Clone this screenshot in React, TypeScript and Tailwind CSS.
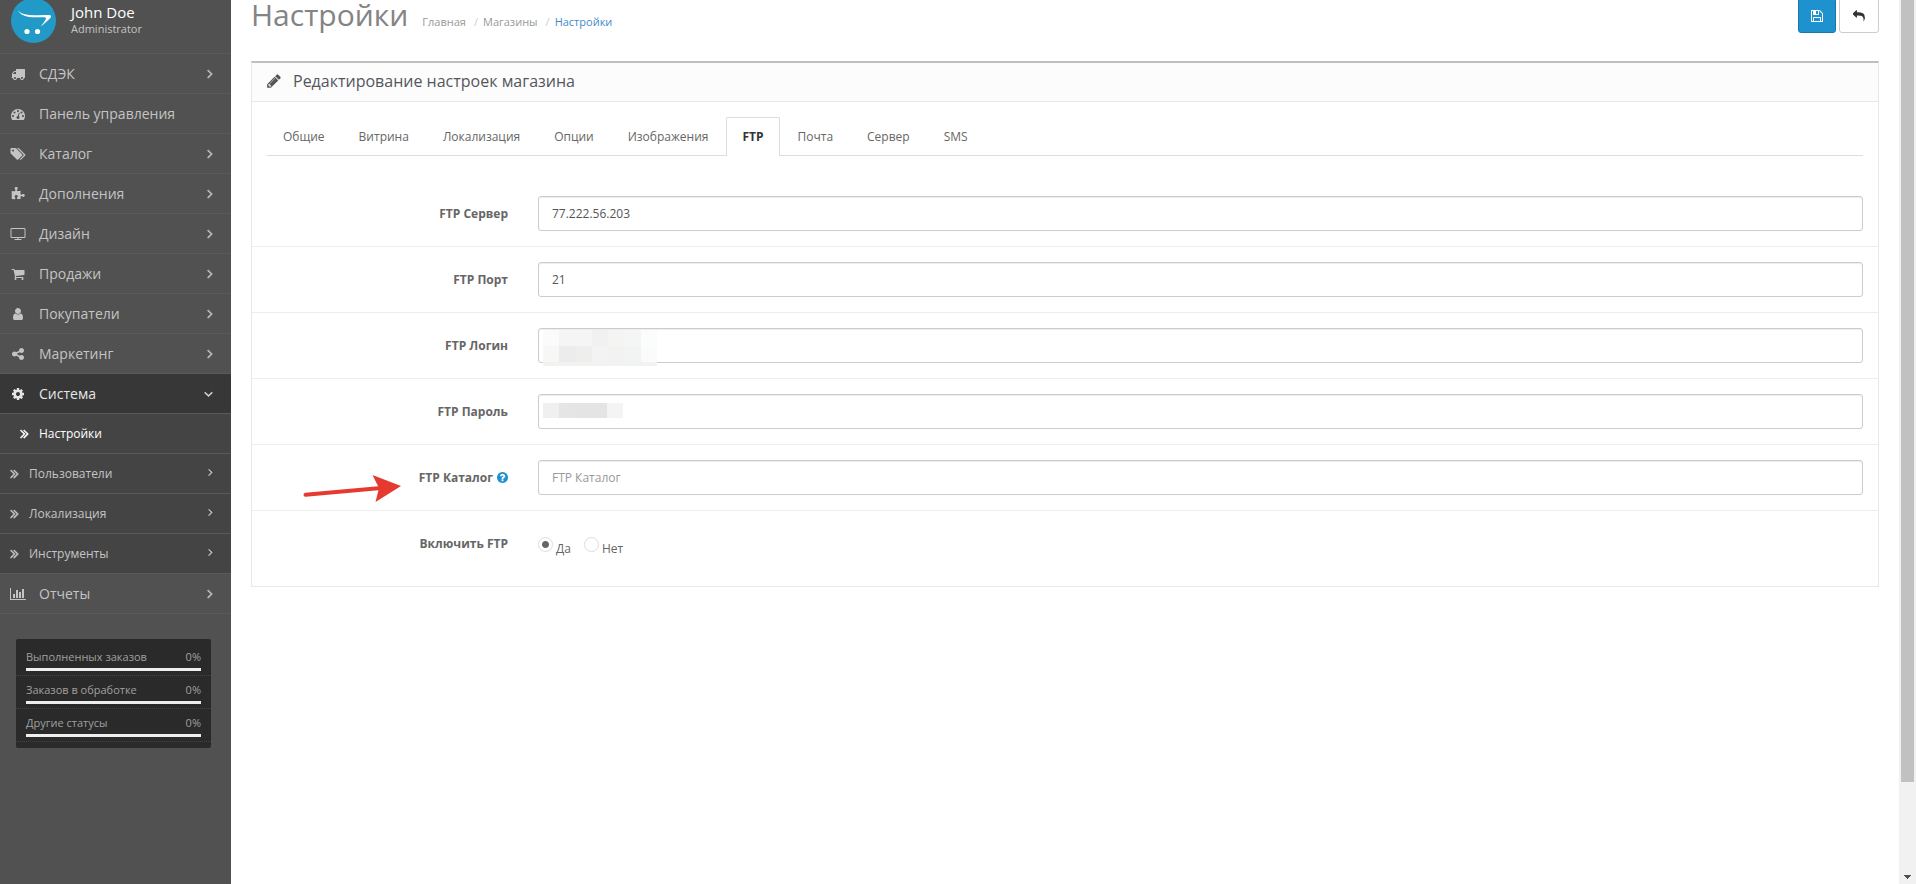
import { useState, type ReactNode } from "react";

type IconData = { x?: number; w?: number; d: string };

const icons: Record<string, IconData> = {
  truck: {
    d: "M640 1408q0-52-38-90t-90-38-90 38-38 90 38 90 90 38 90-38 38-90zm-384-512h384v-256h-158q-13 0-22 9l-195 195q-9 9-9 22v30zm1280 512q0-52-38-90t-90-38-90 38-38 90 38 90 90 38 90-38 38-90zm256-1088v1024q0 15-4 26.5t-13.5 18.5-16.5 11.5-23.5 6-22.5 2-25.5 0-22.5-.5q0 106-75 181t-181 75-181-75-75-181h-384q0 106-75 181t-181 75-181-75-75-181h-64q-3 0-22.5.5t-25.5 0-22.5-2-23.5-6-16.5-11.5-13.5-18.5-4-26.5q0-26 19-45t45-19v-320q0-8-.5-35t0-38 2.5-34.5 6.5-37 14-30.5 22.5-30l198-198q19-19 50.5-32t58.5-13h160v-192q0-26 19-45t45-19h1024q26 0 45 19t19 45z",
  },
  dashboard: {
    d: "M384 1152q0-53-37.5-90.5t-90.5-37.5-90.5 37.5-37.5 90.5 37.5 90.5 90.5 37.5 90.5-37.5 37.5-90.5zm192-448q0-53-37.5-90.5t-90.5-37.5-90.5 37.5-37.5 90.5 37.5 90.5 90.5 37.5 90.5-37.5 37.5-90.5zm428 481l101-382q6-26-7.5-48.5t-38.5-29.5-48 6.5-30 39.5l-101 382q-60 5-107 43.5t-63 98.5q-20 77 20 146t117 89 146-20 89-117q16-60-6-117t-72-91zm660-33q0-53-37.5-90.5t-90.5-37.5-90.5 37.5-37.5 90.5 37.5 90.5 90.5 37.5 90.5-37.5 37.5-90.5zm-640-640q0-53-37.5-90.5t-90.5-37.5-90.5 37.5-37.5 90.5 37.5 90.5 90.5 37.5 90.5-37.5 37.5-90.5zm448 192q0-53-37.5-90.5t-90.5-37.5-90.5 37.5-37.5 90.5 37.5 90.5 90.5 37.5 90.5-37.5 37.5-90.5zm320 448q0 261-141 483-19 29-54 29h-1402q-35 0-54-29-141-221-141-483 0-182 71-348t191-286 286-191 348-71 348 71 286 191 191 286 71 348z",
  },
  tags: {
    w: 1920,
    d: "M448 448q0-53-37.5-90.5t-90.5-37.5-90.5 37.5-37.5 90.5 37.5 90.5 90.5 37.5 90.5-37.5 37.5-90.5zm1067 576q0 53-37 90l-491 492q-39 37-91 37-53 0-90-37l-715-716q-38-37-64.5-101t-26.5-117v-416q0-52 38-90t90-38h416q53 0 117 26.5t102 64.5l715 714q37 39 37 91zm384 0q0 53-37 90l-491 492q-39 37-91 37-36 0-59-14t-53-45l470-470q37-37 37-90 0-52-37-91l-715-714q-38-38-102-64.5t-117-26.5h224q53 0 117 26.5t102 64.5l715 714q37 39 37 91z",
  },
  puzzle: {
    d: "M1755 1083q0 81-44.5 135t-123.5 54q-41 0-77.5-17.5t-59-38-56.5-38-71-17.5q-110 0-110 124 0 39 16 115t15 115v5q-22 0-33 1-34 3-97.5 11.5t-115.5 13.5-98 5q-61 0-103-26.5t-42-83.5q0-37 17.5-71t38-56.5 38-59 17.5-77.5q0-79-54-123.5t-135-44.5q-84 0-143 45.5t-59 127.5q0 43 15 83t33.5 64.5 33.5 53 15 50.5q0 45-46 89-37 35-117 35-95 0-245-24-9-2-27.5-4t-27.5-4l-13-2q-1 0-3-1-2 0-2-1v-1024q2 1 17.5 3.5t34 5 21.5 3.5q150 24 245 24 80 0 117-35 46-44 46-89 0-22-15-50.5t-33.5-53-33.5-64.5-15-83q0-82 59-127.5t144-45.5q80 0 134 44.5t54 123.5q0 41-17.5 77.5t-38 59-38 56.5-17.5 71q0 57 42 83.5t103 26.5q64 0 180-15t163-17v2q-1 2-3.5 17.5t-5 34-3.5 21.5q-24 150-24 245 0 80 35 117 44 46 89 46 22 0 50.5-15t53-33.5 64.5-33.5 83-15q82 0 127.5 59t45.5 143z",
  },
  television: {
    w: 1920,
    d: "M1792 1248v-960q0-13-9.5-22.5t-22.5-9.5h-1600q-13 0-22.5 9.5t-9.5 22.5v960q0 13 9.5 22.5t22.5 9.5h1600q13 0 22.5-9.5t9.5-22.5zm128-960v960q0 66-47 113t-113 47h-736v128h352q14 0 23 9t9 23v64q0 14-9 23t-23 9h-832q-14 0-23-9t-9-23v-64q0-14 9-23t23-9h352v-128h-736q-66 0-113-47t-47-113v-960q0-66 47-113t113-47h1600q66 0 113 47t47 113z",
  },
  cart: {
    d: "M704 1536q0 52-38 90t-90 38-90-38-38-90 38-90 90-38 90 38 38 90zm896 0q0 52-38 90t-90 38-90-38-38-90 38-90 90-38 90 38 38 90zm128-1088v512q0 24-16.5 42.5t-40.5 21.5l-1044 122q13 60 13 70 0 16-24 64h920q26 0 45 19t19 45-19 45-45 19h-1024q-26 0-45-19t-19-45q0-11 8-31.5t16-36 21.5-40 15.5-29.5l-177-823h-204q-26 0-45-19t-19-45 19-45 45-19h256q16 0 28.5 6.5t19.5 15.5 13 24.5 8 26 5.5 29.5 4.5 26h1201q26 0 45 19t19 45z",
  },
  user: {
    d: "M1536 1399q0 109-62.5 187t-150.5 78h-854q-88 0-150.5-78t-62.5-187q0-85 8.5-160.5t31.5-152 58.5-131 94-89 134.5-34.5q131 128 313 128t313-128q76 0 134.5 34.5t94 89 58.5 131 31.5 152 8.5 160.5zm-256-887q0 159-112.5 271.5t-271.5 112.5-271.5-112.5-112.5-271.5 112.5-271.5 271.5-112.5 271.5 112.5 112.5 271.5z",
  },
  share: {
    d: "M1344 1024q133 0 226.5 93.5t93.5 226.5-93.5 226.5-226.5 93.5-226.5-93.5-93.5-226.5q0-12 2-34l-360-180q-92 86-218 86-133 0-226.5-93.5t-93.5-226.5 93.5-226.5 226.5-93.5q126 0 218 86l360-180q-2-22-2-34 0-133 93.5-226.5t226.5-93.5 226.5 93.5 93.5 226.5-93.5 226.5-226.5 93.5q-126 0-218-86l-360 180q2 22 2 34t-2 34l360 180q92-86 218-86z",
  },
  cog: {
    d: "M1152 896q0-106-75-181t-181-75-181 75-75 181 75 181 181 75 181-75 75-181zm512-109v222q0 12-8 23t-20 13l-185 28q-19 54-39 91 35 50 107 138 10 12 10 25t-9 23q-27 37-99 108t-94 71q-12 0-26-9l-138-108q-44 23-91 38-16 136-29 186-7 28-36 28h-222q-14 0-24.5-8.5t-11.5-21.5l-28-184q-49-16-90-37l-141 107q-10 9-25 9-14 0-25-11-126-114-165-168-7-10-7-23 0-12 8-23 15-21 51-66.5t54-70.5q-27-50-41-99l-183-27q-13-2-21-12.5t-8-23.5v-222q0-12 8-23t19-13l186-28q14-46 39-92-40-57-107-138-10-12-10-24 0-10 9-23 26-36 98.5-107.5t94.5-71.5q13 0 26 10l138 107q44-23 91-38 16-136 29-186 7-28 36-28h222q14 0 24.5 8.5t11.5 21.5l28 184q49 16 90 37l142-107q9-9 24-9 13 0 25 10 129 119 165 170 7 8 7 22 0 12-8 23-15 21-51 66.5t-54 70.5q26 50 41 98l183 28q13 2 21 12.5t8 23.5z",
  },
  chart: {
    w: 2048,
    d: "M640 896v512h-256v-512h256zm384-512v1024h-256v-1024h256zm1024 1152v128h-2048v-1536h128v1408h1920zm-640-896v768h-256v-768h256zm384-384v1152h-256v-1152h256z",
  },
  angle: {
    w: 640,
    d: "M595 960q0 13-10 23l-466 466q-10 10-23 10t-23-10l-50-50q-10-10-10-23t10-23l393-393-393-393q-10-10-10-23t10-23l50-50q10-10 23-10t23 10l466 466q10 10 10 23z",
  },
  angleDown: {
    w: 1152,
    d: "M1075 736q0 13-10 23l-466 466q-10 10-23 10t-23-10l-466-466q-10-10-10-23t10-23l50-50q10-10 23-10t23 10l393 393 393-393q10-10 23-10t23 10l50 50q10 10 10 23z",
  },
  angles: {
    w: 1024,
    d: "M595 960q0 13-10 23l-466 466q-10 10-23 10t-23-10l-50-50q-10-10-10-23t10-23l393-393-393-393q-10-10-10-23t10-23l50-50q10-10 23-10t23 10l466 466q10 10 10 23zm384 0q0 13-10 23l-466 466q-10 10-23 10t-23-10l-50-50q-10-10-10-23t10-23l393-393-393-393q-10-10-10-23t10-23l50-50q10-10 23-10t23 10l466 466q10 10 10 23z",
  },
  pencil: {
    x: 128,
    w: 1536,
    d: "M491 1536l91-91-235-235-91 91v107h128v128h107zm523-928q0-22-22-22-10 0-17 7l-542 542q-7 7-7 17 0 22 22 22 10 0 17-7l542-542q7-7 7-17zm-54-192l416 416-832 832h-416v-416zm683 96q0 53-37 90l-166 166-416-416 166-165q36-38 90-38 53 0 91 38l235 234q37 39 37 91z",
  },
  save: {
    x: 128,
    w: 1536,
    d: "M512 1536h768v-384h-768v384zm896 0h128v-896q0-14-10-38.5t-20-34.5l-281-281q-10-10-34-20t-39-10v416q0 40-28 68t-68 28h-576q-40 0-68-28t-28-68v-416h-128v1280h128v-416q0-40 28-68t68-28h832q40 0 68 28t28 68v416zm-384-928v-320q0-13-9.5-22.5t-22.5-9.5h-192q-13 0-22.5 9.5t-9.5 22.5v320q0 13 9.5 22.5t22.5 9.5h192q13 0 22.5-9.5t9.5-22.5zm640 32v928q0 40-28 68t-68 28h-1344q-40 0-68-28t-28-68v-1344q0-40 28-68t68-28h928q40 0 88 20t76 48l280 280q28 28 48 76t20 88z",
  },
  reply: {
    d: "M1792 1120q0 166-127 451-3 7-10.5 24t-13.5 30-13 22q-12 17-28 17-15 0-23.5-10t-8.5-25q0-9 2.5-26.5t2.5-23.5q5-68 5-123 0-112-19.5-200.5t-54-153.5-89-112-120-78-144.5-45-162.5-24.5-175.5-6.5h-224v256q0 26-19 45t-45 19-45-19l-512-512q-19-19-19-45t19-45l512-512q19-19 45-19t45 19 19 45v256h224q713 0 875 403 53 134 53 333z",
  },
  question: {
    x: 128,
    w: 1536,
    d: "M1024 1376v-192q0-14-9-23t-23-9h-192q-14 0-23 9t-9 23v192q0 14 9 23t23 9h192q14 0 23-9t9-23zm256-672q0-88-55.5-163t-138.5-116-170-41q-243 0-371 213-15 24 8 42l132 100q7 6 19 6 16 0 25-12 53-68 86-92 34-24 86-24 48 0 85.5 26t37.5 59q0 38-20 61t-68 45q-63 28-115.5 86.5t-52.5 125.5v36q0 14 9 23t23 9h192q14 0 23-9t9-23q0-19 21.5-49.5t54.5-49.5q32-18 49-28.5t46-35 44.5-48 28-60.5 12.5-81zm384 192q0 209-103 385.5t-279.5 279.5-385.5 103-385.5-103-279.5-279.5-103-385.5 103-385.5 279.5-279.5 385.5-103 385.5 103 279.5 279.5 103 385.5z",
  },
};

function Icon({ name, className }: { name: string; className: string }) {
  const icon = icons[name];
  return (
    <svg viewBox={`${icon.x ?? 0} 0 ${icon.w ?? 1792} 1792`} className={`shrink-0 ${className}`} fill="currentColor" aria-hidden="true">
      <path d={icon.d} />
    </svg>
  );
}

const menu = [
  { icon: "truck", label: "СДЭК", more: true },
  { icon: "dashboard", label: "Панель управления", more: false },
  { icon: "tags", label: "Каталог", more: true },
  { icon: "puzzle", label: "Дополнения", more: true },
  { icon: "television", label: "Дизайн", more: true },
  { icon: "cart", label: "Продажи", more: true },
  { icon: "user", label: "Покупатели", more: true },
  { icon: "share", label: "Маркетинг", more: true },
];

const subMenu = ["Пользователи", "Локализация", "Инструменты"];
const stats = ["Выполненных заказов", "Заказов в обработке", "Другие статусы"];
const tabs = ["Общие", "Витрина", "Локализация", "Опции", "Изображения", "FTP", "Почта", "Сервер", "SMS"];

function MenuLink({ icon, label, more }: { icon: string; label: string; more: boolean }) {
  return (
    <a href="#" className="flex h-10 items-center border-t border-[#5a5a5a] pr-[18px] pl-[10px] text-sm text-[#c4c4c4]">
      <span className="flex w-[29px]">
        <Icon name={icon} className="h-[14px] w-4" />
      </span>
      <span className="grow">{label}</span>
      {more && <Icon name="angle" className="h-[15px] w-[6px] stroke-current stroke-[60]" />}
    </a>
  );
}

function Sidebar() {
  return (
    <nav className="w-[231px] shrink-0 bg-[#515151]">
      <div className="flex h-[55px] items-start gap-[15px] pl-[11px]">
        <svg viewBox="0 0 45 45" className="size-[45px] shrink-0" aria-hidden="true">
          <circle cx="22.5" cy="22.5" r="22.5" fill="#229ac8" />
          <path
            fill="#fff"
            d="M6.800 12c2.200 3.200 6.200 4.600 12.200 5 6 .4 13 .2 18.500.1 2.800 0 3.400 1 1.800 2.900-2 2.400-5 4.800-9.400 8.600 1.800-3 3.700-5.200 4.700-7.100.8-1.500.4-2.100-1.600-2.200-5-.3-10.800.4-16.200-.6C12 17.700 8.600 15.800 6.800 12z"
          />
          <circle cx="16" cy="33.500" r="2.600" fill="#fff" />
          <circle cx="26.500" cy="33.500" r="2.600" fill="#fff" />
        </svg>
        <div className="pt-1">
          <div className="text-[15px] leading-5 text-white">John Doe</div>
          <div className="text-[11px] leading-[14px] text-[#c4c4c4]">Administrator</div>
        </div>
      </div>
      {menu.map((item) => (
        <MenuLink key={item.label} {...item} />
      ))}
      <a href="#" className="flex h-10 items-center border-t border-[#5a5a5a] bg-[#373737] pr-[18px] pl-[10px] text-sm text-[#e6e6e6]">
        <span className="flex w-[29px]">
          <Icon name="cog" className="h-[14px] w-4" />
        </span>
        <span className="grow">Система</span>
        <Icon name="angleDown" className="h-[14px] w-[9px] stroke-current stroke-[60]" />
      </a>
      <div className="bg-[#444444]">
        <a href="#" className="flex h-10 items-center border-t border-[#5a5a5a] pl-5 text-xs font-medium text-white">
          <span className="flex w-[19px]">
            <Icon name="angles" className="h-[15px] w-[9px] stroke-current stroke-[60]" />
          </span>
          Настройки
        </a>
        {subMenu.map((label) => (
          <a key={label} href="#" className="flex h-10 items-center border-t border-[#5a5a5a] pr-[18px] pl-[10px] text-xs text-[#c4c4c4]">
            <span className="flex w-[19px]">
              <Icon name="angles" className="h-[15px] w-[9px] stroke-current stroke-[60]" />
            </span>
            <span className="grow">{label}</span>
            <Icon name="angle" className="mb-[3px] h-3 w-[5px] stroke-current stroke-[60]" />
          </a>
        ))}
      </div>
      <MenuLink icon="chart" label="Отчеты" more />
      <div className="border-t border-[#5a5a5a] px-4 pt-[25px]">
        <div className="mr-1 rounded-xs bg-[#2a2a2a] pt-1 pb-[6px] text-[11px] leading-4 text-[#a0a0a0]">
          {stats.map((label) => (
            <div key={label} className="border-b border-dotted border-[#444444] px-[10px] pt-[6px] pb-1">
              <div className="flex justify-between">
                <span>{label}</span>
                <span>0%</span>
              </div>
              <div className="mt-[3px] h-[3px] bg-[#eeeeee]" />
            </div>
          ))}
        </div>
      </div>
    </nav>
  );
}

function Row({ id, label, children, extra, last }: { id?: string; label: ReactNode; children: ReactNode; extra?: ReactNode; last?: boolean }) {
  return (
    <div className={last ? "flex py-[15px]" : "flex border-b border-[#ededed] py-[15px]"}>
      <div className="relative w-1/6 shrink-0 px-[15px] pt-[9px] text-right text-xs leading-[17px] font-bold text-[#666666]">
        {id ? <label htmlFor={id}>{label}</label> : <span>{label}</span>}
        {extra}
      </div>
      <div className="relative grow px-[15px]">{children}</div>
    </div>
  );
}

const inputClass =
  "block h-[35px] w-full rounded-[3px] border border-[#cccccc] bg-white px-[13px] text-xs text-[#555555] shadow-[inset_0_1px_1px_rgba(0,0,0,0.075)] outline-none placeholder:text-[#999999]";
const radioClass =
  "size-[15px] appearance-none rounded-full border border-[#dddddd] bg-white checked:bg-[radial-gradient(circle,#666666_3px,transparent_4px)]";

function Arrow() {
  return (
    <svg viewBox="0 0 98 30" className="absolute top-[14px] left-[51px] h-[30px] w-[98px]" aria-hidden="true">
      <path d="M2.500 20.700L78 14" stroke="#e63a30" strokeWidth="4" strokeLinecap="round" />
      <path d="M98 12L69.500 1l6.500 13-3.500 14z" fill="#e63a30" />
    </svg>
  );
}

export default function App() {
  const [tab, setTab] = useState("FTP");
  return (
    <div className="flex h-screen overflow-hidden bg-white font-['Open_Sans','Noto_Sans',sans-serif] text-xs text-[#666666]">
      <div className="-mt-[2px] flex grow">
        <Sidebar />
        <main className="grow px-5">
          <header className="flex h-[63px] items-start justify-between">
            <div className="flex items-baseline gap-[14px]">
              <h1 className="text-[30px] leading-[33px] text-[#848484]">Настройки</h1>
              <ol className="flex text-[11px] text-[#999999]">
                <li><a href="#">Главная</a></li>
                <li className="pl-2 before:pr-[5px] before:text-[#cccccc] before:content-['/']"><a href="#">Магазины</a></li>
                <li className="pl-2 text-[#428bca] before:pr-[5px] before:text-[#cccccc] before:content-['/']"><a href="#">Настройки</a></li>
              </ol>
            </div>
            <div className="flex gap-[3px]">
              <button type="button" aria-label="Сохранить" className="flex h-[35px] w-[38px] items-center justify-center rounded-[3px] border border-[#1978ab] bg-[#1e91cf] text-white">
                <Icon name="save" className="h-[14px] w-3" />
              </button>
              <button type="button" aria-label="Отменить" className="flex h-[35px] w-10 items-center justify-center rounded-[3px] border border-[#cccccc] bg-white text-[#333333]">
                <Icon name="reply" className="size-3" />
              </button>
            </div>
          </header>

          <section className="border border-t-2 border-[#e8e8e8] border-t-[#bfbfbf]">
            <h2 className="flex h-[39px] items-center gap-3 border-b border-[#e8e8e8] bg-[#fcfcfc] px-[15px] pb-[2px] text-base text-[#55565c]">
              <Icon name="pencil" className="h-4 w-[14px]" />
              Редактирование настроек магазина
            </h2>
            <div className="py-[15px]">
              <div className="mx-[15px] mb-[25px] flex gap-[2px] border-b border-[#dddddd]" role="tablist">
                {tabs.map((name) => (
                  <button
                    key={name}
                    type="button"
                    role="tab"
                    aria-selected={tab === name}
                    onClick={() => setTab(name)}
                    className={
                      tab === name
                        ? "-mb-px h-[39px] rounded-t-xs border border-b-0 border-[#dddddd] bg-white px-[15px] font-bold text-[#333333]"
                        : "h-[38px] border border-b-0 border-transparent px-[15px] text-[#666666]"
                    }
                  >
                    {name}
                  </button>
                ))}
              </div>
              <form>
                <Row id="ftp-host" label="FTP Сервер">
                  <input id="ftp-host" type="text" defaultValue="77.222.56.203" className={inputClass} />
                </Row>
                <Row id="ftp-port" label="FTP Порт">
                  <input id="ftp-port" type="text" defaultValue="21" className={inputClass} />
                </Row>
                <Row id="ftp-login" label="FTP Логин">
                  <input id="ftp-login" type="text" className={inputClass} />
                  <div className="absolute top-[2px] left-5 grid w-[114px] grid-cols-7 grid-rows-[16px_16px_4px]" aria-hidden="true">
                    <i className="bg-[#fbfbfb]" /><i className="bg-[#f5f5f6]" /><i className="bg-[#f5f5f6]" /><i className="bg-[#f1f1f2]" /><i className="bg-[#f4f4f3]" /><i className="bg-[#f4f5f5]" /><i className="bg-[#fbfdfd]" />
                    <i className="bg-[#f7f7f6]" /><i className="bg-[#ececed]" /><i className="bg-[#eeeeed]" /><i className="bg-[#f3f3f4]" /><i className="bg-[#f1f2f1]" /><i className="bg-[#f2f4f4]" /><i className="bg-[#fbfbfc]" />
                    <i className="col-span-7 bg-[#f2f2f2]" />
                  </div>
                </Row>
                <Row id="ftp-password" label="FTP Пароль">
                  <input id="ftp-password" type="text" className={inputClass} />
                  <div className="absolute top-[9px] left-5 grid h-[15px] w-20 grid-cols-5" aria-hidden="true">
                    <i className="bg-[#f0f0f0]" /><i className="bg-[#e5e5e5]" /><i className="bg-[#e4e4e5]" /><i className="bg-[#e4e4e4]" /><i className="bg-[#f4f4f4]" />
                  </div>
                </Row>
                <Row
                  id="ftp-root"
                  label={
                    <span className="inline-flex items-center gap-1">
                      FTP Каталог
                      <Icon name="question" className="h-[13px] w-[11px] text-[#1e91cf]" />
                    </span>
                  }
                  extra={<Arrow />}
                >
                  <input id="ftp-root" type="text" placeholder="FTP Каталог" className={inputClass} />
                </Row>
                <Row label="Включить FTP" last>
                  <div className="flex h-[30px] gap-[13px] pt-[11px]">
                    <label className="flex items-start gap-[3px]">
                      <input type="radio" name="ftp-status" defaultChecked className={radioClass} />
                      <span className="pt-1 leading-4">Да</span>
                    </label>
                    <label className="flex items-start gap-[3px]">
                      <input type="radio" name="ftp-status" className={radioClass} />
                      <span className="pt-1 leading-4">Нет</span>
                    </label>
                  </div>
                </Row>
              </form>
            </div>
          </section>
        </main>
      </div>
      <div className="flex w-[17px] shrink-0 flex-col items-center justify-between bg-[#f1f1f1]" aria-hidden="true">
        <div className="h-[88.5%] w-[13px] bg-[#c1c1c1]" />
        <svg viewBox="0 0 7 4" className="mb-[5px] h-1 w-[7px]" fill="#505050" shapeRendering="crispEdges">
          <path d="M0 0h7v1H6v1H5v1H4v1H3V3H2V2H1V1H0z" />
        </svg>
      </div>
    </div>
  );
}
